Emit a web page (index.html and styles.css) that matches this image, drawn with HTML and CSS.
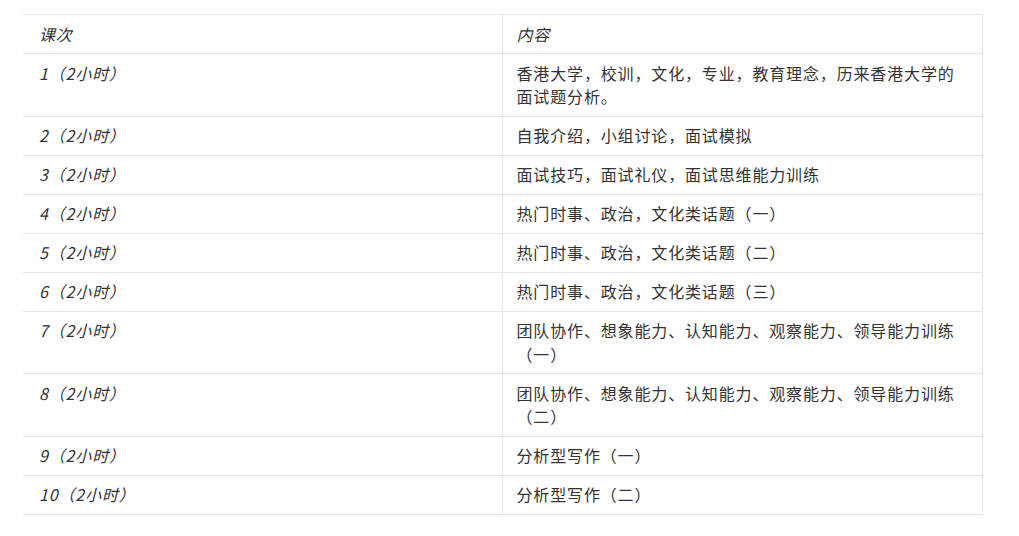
FILE: index.html
```html
<!DOCTYPE html>
<html lang="zh-CN">
<head>
<meta charset="utf-8">
<title>课程安排</title>
<link rel="stylesheet" href="styles.css">
</head>
<body>
<div class="page">
  <table class="schedule">
    <thead>
      <tr><th class="c1">课次</th><th class="c2">内容</th></tr>
    </thead>
    <tbody>
      <tr><td class="c1">1（2小时）</td><td class="c2">香港大学，校训，文化，专业，教育理念，历来香港大学的面试题分析。</td></tr>
      <tr><td class="c1">2（2小时）</td><td class="c2">自我介绍，小组讨论，面试模拟</td></tr>
      <tr><td class="c1">3（2小时）</td><td class="c2">面试技巧，面试礼仪，面试思维能力训练</td></tr>
      <tr><td class="c1">4（2小时）</td><td class="c2">热门时事、政治，文化类话题（一）</td></tr>
      <tr><td class="c1">5（2小时）</td><td class="c2">热门时事、政治，文化类话题（二）</td></tr>
      <tr><td class="c1">6（2小时）</td><td class="c2">热门时事、政治，文化类话题（三）</td></tr>
      <tr><td class="c1">7（2小时）</td><td class="c2">团队协作、想象能力、认知能力、观察能力、领导能力训练（一）</td></tr>
      <tr><td class="c1">8（2小时）</td><td class="c2">团队协作、想象能力、认知能力、观察能力、领导能力训练（二）</td></tr>
      <tr><td class="c1">9（2小时）</td><td class="c2">分析型写作（一）</td></tr>
      <tr><td class="c1">10（2小时）</td><td class="c2">分析型写作（二）</td></tr>
    </tbody>
  </table>
</div>
</body>
</html>
```
FILE: styles.css
```css
html, body {
  margin: 0;
  padding: 0;
  background: #ffffff;
}
.page {
  padding: 14px 0 0 23px;
}
.schedule {
  border-collapse: collapse;
  width: 960px;
  table-layout: fixed;
  font-family: "Noto Sans CJK SC", "Noto Sans", sans-serif;
  font-size: 16px;
  letter-spacing: 0.85px;
  line-height: 23.5px;
  color: #333333;
}
.schedule th,
.schedule td {
  font-weight: normal;
  text-align: left;
  vertical-align: top;
  padding: 7.5px 15px 7px 15px;
  border-top: 1px solid #e6e6e6;
  border-bottom: 1px solid #e6e6e6;
}
.schedule th {
  font-style: italic;
}
.schedule .c1 {
  width: 479px;
  box-sizing: border-box;
  font-style: italic;
  padding-left: 16px;
}
.schedule .c2 {
  border-left: 1px solid #e6e6e6;
  border-right: 1px solid #e6e6e6;
  padding-left: 14px;
}
```
